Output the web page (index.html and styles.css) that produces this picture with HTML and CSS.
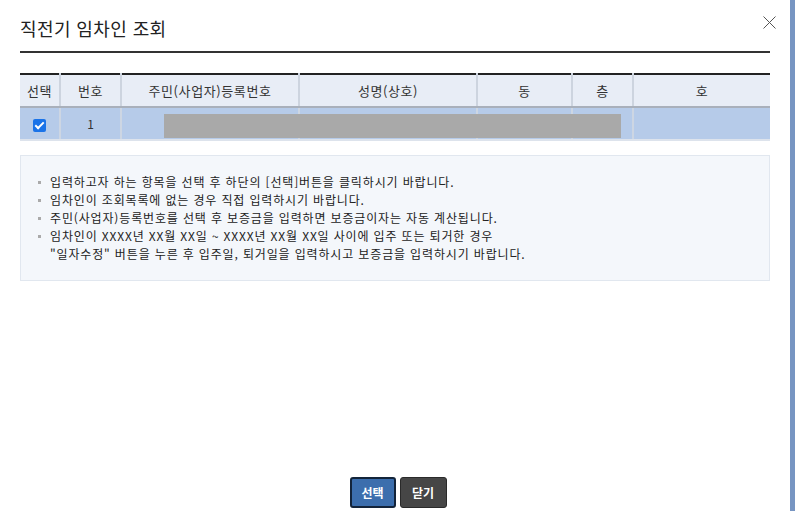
FILE: index.html
```html
<!DOCTYPE html>
<html lang="ko">
<head>
    <meta charset="UTF-8">
    <title>직전기 임차인 조회</title>
    <link rel="stylesheet" href="styles.css">
</head>
<body>
<div class="frame">
    <div class="popup">
        <div class="pop-head">
            <h1 class="pop-title">직전기 임차인 조회</h1>
            <button class="btn-close" type="button" aria-label="닫기">
                <svg width="13" height="13" viewBox="0 0 13 13">
                    <path d="M0.5 0.5 L12.5 12.5 M12.5 0.5 L0.5 12.5" stroke="#555" stroke-width="1" fill="none"/>
                </svg>
            </button>
        </div>

        <table class="grid">
            <colgroup>
                <col style="width:40px">
                <col style="width:61px">
                <col style="width:178px">
                <col style="width:178px">
                <col style="width:95px">
                <col style="width:61px">
                <col>
            </colgroup>
            <thead>
                <tr>
                    <th>선택</th>
                    <th>번호</th>
                    <th>주민(사업자)등록번호</th>
                    <th>성명(상호)</th>
                    <th>동</th>
                    <th>층</th>
                    <th>호</th>
                </tr>
            </thead>
            <tbody>
                <tr class="selected">
                    <td><span class="chk"></span></td>
                    <td>1</td>
                    <td class="masked-cell"><div class="mask"></div></td>
                    <td></td>
                    <td></td>
                    <td></td>
                    <td></td>
                </tr>
            </tbody>
        </table>

        <div class="guide">
            <ul>
                <li>입력하고자 하는 항목을 선택 후 하단의 [선택]버튼을 클릭하시기 바랍니다.</li>
                <li>임차인이 조회목록에 없는 경우 직접 입력하시기 바랍니다.</li>
                <li>주민(사업자)등록번호를 선택 후 보증금을 입력하면 보증금이자는 자동 계산됩니다.</li>
                <li>임차인이 XXXX년 XX월 XX일 ~ XXXX년 XX월 XX일 사이에 입주 또는 퇴거한 경우<br>"일자수정" 버튼을 누른 후 입주일, 퇴거일을 입력하시고 보증금을 입력하시기 바랍니다.</li>
            </ul>
        </div>

        <div class="btn-area">
            <button class="btn btn-blue" type="button">선택</button>
            <button class="btn btn-dark" type="button">닫기</button>
        </div>
    </div>
    <div class="side-bar"></div>
</div>
</body>
</html>
```

FILE: styles.css
```css
* {
    margin: 0;
    padding: 0;
    box-sizing: border-box;
}
body {
    font-family: "Noto Sans CJK KR", "Noto Sans", sans-serif;
    color: #333;
    background: #fff;
    font-size: 12px;
}
.frame {
    display: flex;
    width: 795px;
    height: 511px;
}
.popup {
    flex: 1;
    display: flex;
    flex-direction: column;
    padding: 0 20px 0 20px;
}
.side-bar {
    width: 5px;
    background: #7795c2;
}

.pop-head {
    position: relative;
    height: 53px;
    border-bottom: 2px solid #333;
    display: flex;
    align-items: center;
}
.pop-title {
    font-size: 18px;
    font-weight: normal;
    color: #222;
    padding-top: 4px;
    letter-spacing: 0.4px;
}
.btn-close {
    position: absolute;
    right: -6px;
    top: 16px;
    border: 0;
    background: none;
    width: 14px;
    height: 14px;
    cursor: pointer;
}

.grid {
    margin-top: 20px;
    width: 100%;
    border-collapse: collapse;
    table-layout: fixed;
    border-top: 2px solid #222;
}
.grid th {
    height: 33px;
    background: #e8edf6;
    font-size: 13px;
    font-weight: normal;
    color: #333;
    letter-spacing: 0.6px;
    border-left: 2px solid #cdd4df;
    border-bottom: 2px solid #a9b0bb;
}
.grid th:first-child,
.grid td:first-child {
    border-left: 0;
}
.grid td {
    height: 33px;
    text-align: center;
    font-size: 12px;
    border-left: 2px solid #cdd6e3;
    border-bottom: 2px solid #dde3ec;
}
.grid .selected td {
    background: #b6cbe9;
}
.masked-cell {
    position: relative;
}
.mask {
    position: absolute;
    left: 42px;
    top: 6px;
    width: 457px;
    height: 24px;
    background: #a9a9a9;
}
.chk {
    display: inline-block;
    width: 13px;
    height: 13px;
    border-radius: 2px;
    background: #1a73e8;
    position: relative;
    vertical-align: middle;
}
.chk::after {
    content: "";
    position: absolute;
    left: 4px;
    top: 1px;
    width: 3px;
    height: 7px;
    border: solid #fff;
    border-width: 0 2px 2px 0;
    transform: rotate(45deg);
}

.guide {
    margin-top: 14px;
    height: 126px;
    background: #f4f7fb;
    border: 1px solid #e1e7ef;
    padding: 17px 16px;
}
.guide ul {
    list-style: none;
}
.guide li {
    position: relative;
    padding-left: 13px;
    line-height: 18px;
    font-size: 12px;
    letter-spacing: 0.85px;
    color: #222;
}
.guide li::before {
    content: "";
    position: absolute;
    left: 1px;
    top: 8px;
    width: 3px;
    height: 3px;
    background: #aaa;
}

.btn-area {
    margin-top: auto;
    display: flex;
    justify-content: center;
    gap: 4px;
    padding: 0 0 3px 6px;
}
.btn {
    height: 31px;
    width: 46px;
    border-radius: 3px;
    font-family: "Noto Sans CJK KR", sans-serif;
    font-size: 12px;
    font-weight: bold;
    color: #fff;
    cursor: pointer;
}
.btn-blue {
    background: #3c6ead;
    border: 2px solid #13243a;
}
.btn-dark {
    background: #464646;
    border: 1px solid #2a2a2a;
    width: 47px;
}
```
